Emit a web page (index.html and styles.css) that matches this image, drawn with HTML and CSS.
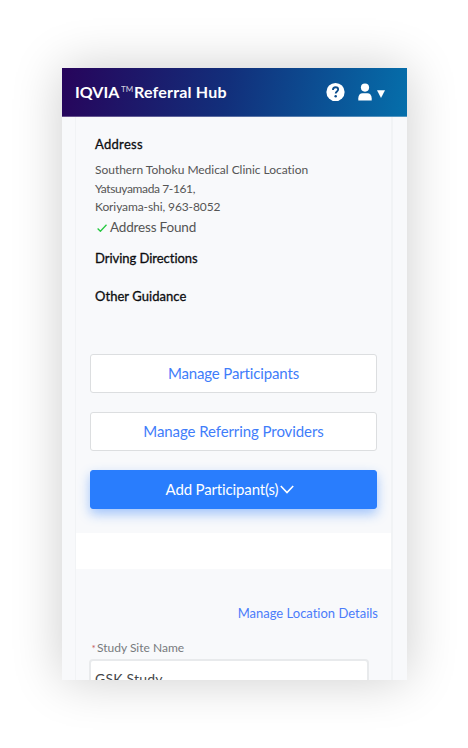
FILE: index.html
```html
<!DOCTYPE html>
<html lang="en">
<head>
<meta charset="utf-8">
<title>IQVIA Referral Hub</title>
<link rel="stylesheet" href="styles.css">
</head>
<body>
<main class="phone">
  <header class="bar">
    <div class="brand"><span class="brand-name">IQVIA</span><span class="tm">TM</span><span class="brand-product">Referral Hub</span></div>
    <svg class="help" viewBox="0 0 20 20"><circle cx="10" cy="10" r="9.6" fill="#fff"/><path d="M7.3 7.8C7.3 6 8.4 5 10.1 5s2.7 1 2.7 2.4c0 2-2.6 2-2.6 4.1" fill="none" stroke="#0c4d8d" stroke-width="1.9"/><circle cx="10.2" cy="14.4" r="1.3" fill="#0c4d8d"/></svg>
    <svg class="user" viewBox="0 0 14 18"><circle cx="7" cy="4.6" r="4.1" fill="#fff"/><path d="M.3 17.5v-2.200C.3 12 2.200 10.200 4.500 10.200h5c2.300 0 4.200 1.800 4.200 5.100v2.200z" fill="#fff"/></svg>
    <svg class="caret" viewBox="0 0 8 8"><path d="M0 .3h8L4 8z" fill="#fff"/></svg>
  </header>
  <div class="column">
    <section class="card">
      <div class="info">
        <h2 class="t-address">Address</h2>
        <p class="t-line1">Southern Tohoku Medical Clinic Location</p>
        <p class="t-line2">Yatsuyamada 7-161,</p>
        <p class="t-line3">Koriyama-shi, 963-8052</p>
        <div class="found"><svg class="check" viewBox="0 0 10 8"><path d="M.6 4.500 3.400 7.300 9.500.8" fill="none" stroke="#25c840" stroke-width="1.300"/></svg><span>Address Found</span></div>
        <h2 class="t-driving">Driving Directions</h2>
        <h2 class="t-other">Other Guidance</h2>
      </div>
      <div class="actions">
        <div class="btn"><span class="b-part">Manage Participants</span></div>
        <div class="btn"><span class="b-prov">Manage Referring Providers</span></div>
        <div class="btn primary"><span class="b-add">Add Participant(s)</span><svg class="chevron" viewBox="0 0 14 9"><path d="m.8 1 6.200 6.500L13.200 1" fill="none" stroke="#fff" stroke-width="1.600"/></svg></div>
      </div>
    </section>
    <div class="gap"></div>
    <section class="details">
      <a class="manage">Manage Location Details</a>
      <label class="label"><span class="req">*</span><span class="label-text">Study Site Name</span></label>
      <div class="field"><span>GSK Study</span></div>
    </section>
  </div>
</main>
</body>
</html>
```
FILE: styles.css
```css
* { box-sizing: border-box; }
body {
  margin: 0;
  padding: 68px 61px 68px 62px;
  background: #fff;
  font-family: Lato, "Open Sans", sans-serif;
  font-variant-ligatures: none;
  overflow: hidden;
}
h2, p { margin: 0; white-space: nowrap; }
svg { display: block; flex: none; }
.phone {
  width: 345px;
  height: 612px;
  background: #f8f9fb;
  box-shadow: 0 0 48px rgba(0, 0, 0, .2);
}
.bar {
  height: 49px;
  display: flex;
  align-items: center;
  padding: 0 22px 0 13px;
  background: linear-gradient(100deg, #27045b 0%, #122f7b 48%, #056fab 100%);
  border-bottom: 1px solid rgba(255, 255, 255, .3);
  color: #fff;
}
.brand { display: flex; flex: 1; height: 22px; line-height: 22px; font-size: 16px; font-weight: 700; white-space: nowrap; }
.brand-name { width: 46px; }
.tm { width: 13px; font-size: 8px; font-weight: 400; line-height: 16px; opacity: .8; }
.brand-product { letter-spacing: .2px; }
.help { width: 19px; height: 20px; margin-right: 13px; }
.user { width: 14px; height: 18px; margin-right: 5px; }
.caret { width: 8px; height: 8px; margin-top: 4px; }
.column {
  width: 318px;
  height: 563px;
  margin-left: 13px;
  border: solid #f1f3f5;
  border-width: 0 2px 0 1px;
  overflow: hidden;
}
.card { height: 416px; background: #f8f9fb; border-radius: 0 0 3px 3px; }
.info { height: 237px; padding: 17px 0 0 19px; }
.info h2 { font-size: 13px; line-height: 20px; font-weight: 400; -webkit-text-stroke: .3px #0c0d10; color: #0c0d10; letter-spacing: .05px; }
.info p { font-size: 12px; line-height: 18.500px; color: #555; letter-spacing: -.03px; }
.info .t-address { margin-bottom: 7px; letter-spacing: .3px; }
.info .t-line2 { letter-spacing: -.38px; }
.info .t-line3 { letter-spacing: -.1px; }
.found { display: flex; height: 20px; padding-left: 2px; align-items: center; font-size: 13.500px; letter-spacing: -.18px; color: #555; white-space: nowrap; }
.check { width: 10px; height: 8px; margin: 3px 3px 0 0; }
.info .t-driving { margin-top: 11px; letter-spacing: -.03px; }
.info .t-other { margin-top: 18px; }
.actions { display: grid; gap: 19px; padding: 0 14px; }
.btn {
  height: 39px;
  display: flex;
  align-items: center;
  justify-content: center;
  border: 1px solid #dcdee0;
  border-radius: 3px;
  padding-bottom: 2px;
  background: #fff;
  color: #3f7dfa;
  font-size: 15px;
  letter-spacing: -.14px;
  white-space: nowrap;
}
.b-prov { letter-spacing: -.08px; }
.primary { background: #297dfd; border-color: #297dfd; color: #fff; padding-right: 7px; box-shadow: 0 5px 12px rgba(41, 125, 253, .42); }
.chevron { width: 14px; height: 9px; margin: 1px 0 0 2px; }
.gap { height: 36px; background: #fff; }
.details { display: flex; flex-direction: column; padding: 34px 13px 0 13px; }
.manage { align-self: flex-end; font-size: 13px; line-height: 20px; color: #4b7cfa; white-space: nowrap; }
.label { display: flex; padding-left: 2.500px; margin-top: 16px; font-size: 12px; line-height: 18px; color: #77797d; }
.req { width: 5.500px; color: #c45b5b; font-size: 10px; }
.field { width: 280px; height: 40px; margin-top: 2px; padding: 8px 0 0 4px; border: 2px solid #e8eaec; border-radius: 4px; background: #fff; font-size: 14px; line-height: 20px; color: #45474a; letter-spacing: .2px; }
```
